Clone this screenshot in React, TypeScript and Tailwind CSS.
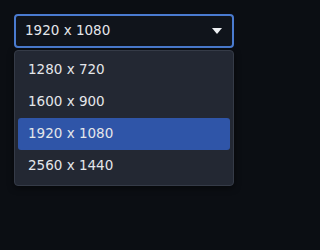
import React, { useState } from 'react';

const options = ['1280 x 720', '1600 x 900', '1920 x 1080', '2560 x 1440'];

// 分辨率下拉选择
export default function App() {
  const [value, setValue] = useState('1920 x 1080');

  return (
    <div
      className="w-[320px] h-[250px] bg-[#0b0e13] p-[14px] text-[13.5px] text-[#e4e6ea]"
      style={{ fontFamily: '"DejaVu Sans", sans-serif' }}
    >
      <div className="w-[220px]">
        {/* 选择框 */}
        <button className="flex w-full h-[34px] items-center justify-between rounded-[4px] border-2 border-[#4a7bd0] bg-[#10141b] pl-[9px] pr-[10px] pb-[2px]">
          <span>{value}</span>
          <svg width="10" height="6" viewBox="0 0 10 6" className="mt-[2px]">
            <path d="M0 0 L10 0 L5 6 Z" fill="#eef0f3" />
          </svg>
        </button>

        {/* 下拉列表 */}
        <div className="mt-[2px] rounded-[4px] border border-[#353b47] bg-[#232833] p-[3px] shadow-[0_2px_6px_rgba(0,0,0,0.5)]">
          {options.map((opt) => (
            <div
              key={opt}
              onClick={() => setValue(opt)}
              className={`flex h-[32px] items-center rounded-[3px] px-[10px] pb-[2px] ${
                opt === value ? 'bg-[#2f55a8]' : ''
              }`}
            >
              {opt}
            </div>
          ))}
        </div>
      </div>
    </div>
  );
}
